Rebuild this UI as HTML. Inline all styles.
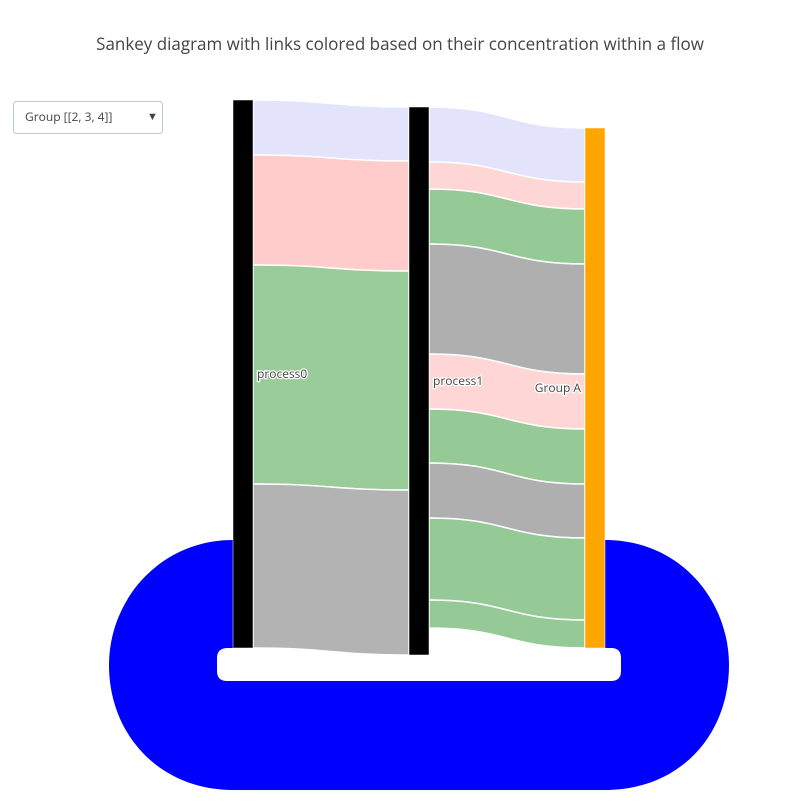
<!DOCTYPE html>
<html><head><style>
body{margin:0;background:#fff;width:800px;height:800px;overflow:hidden;font-family:"Open Sans","Liberation Sans",sans-serif}
svg text{font-family:"Open Sans","Liberation Sans",sans-serif}
</style></head><body>
<svg width="800" height="800" xmlns="http://www.w3.org/2000/svg">
<text x="400" y="50" text-anchor="middle" font-size="17" fill="#444">Sankey diagram with links colored based on their concentration within a flow</text>
<path fill="#0000ff" fill-rule="evenodd" d="M233,540 L605,540 C680,540 729,600 729,665 C729,735 680,790 605,790 L233,790 C160,790 109,735 109,665 C109,600 160,540 233,540 Z M228,648 L611,648 Q621,648 621,658 L621,671 Q621,681 611,681 L227,681 Q217,681 217,671 L217,658 Q217,648 228,648 Z"/>
<rect x="233" y="540" width="372" height="108" fill="#fff"/>
<g stroke="#fff" stroke-width="1.5">
<path fill="#e3e3fc" d="M253,100C331,100 331,107 409,107L409,161C331,161 331,155 253,155Z"/>
<path fill="#ffcccc" d="M253,155C331,155 331,161 409,161L409,271C331,271 331,265 253,265Z"/>
<path fill="#99cc99" d="M253,265C331,265 331,271 409,271L409,490C331,490 331,484 253,484Z"/>
<path fill="#b3b3b3" d="M253,484C331,484 331,490 409,490L409,655C331,655 331,648 253,648Z"/>
<path fill="#e3e3fc" d="M429,107C507,107 507,128 585,128L585,182C507,182 507,162 429,162Z"/>
<path fill="#ffd6d6" d="M429,162C507,162 507,182 585,182L585,209C507,209 507,189 429,189Z"/>
<path fill="#95c995" d="M429,189C507,189 507,209 585,209L585,264C507,264 507,244 429,244Z"/>
<path fill="#afafaf" d="M429,244C507,244 507,264 585,264L585,374C507,374 507,354 429,354Z"/>
<path fill="#ffd6d6" d="M429,354C507,354 507,374 585,374L585,429C507,429 507,409 429,409Z"/>
<path fill="#95c995" d="M429,409C507,409 507,429 585,429L585,484C507,484 507,463 429,463Z"/>
<path fill="#afafaf" d="M429,463C507,463 507,484 585,484L585,538C507,538 507,518 429,518Z"/>
<path fill="#95c995" d="M429,518C507,518 507,538 585,538L585,620C507,620 507,600 429,600Z"/>
<path fill="#95c995" d="M429,600C507,600 507,620 585,620L585,648C507,648 507,628 429,628Z"/>
</g>
<rect x="233" y="100" width="20" height="548" fill="#000" stroke="#fff" stroke-width="0.5"/>
<rect x="409" y="107" width="20" height="548" fill="#000" stroke="#fff" stroke-width="0.5"/>
<rect x="585" y="128" width="20" height="520" fill="#ffa500" stroke="#fff" stroke-width="0.5"/>
<g font-size="12" fill="#444" stroke="#fff" stroke-width="2.5" paint-order="stroke">
<text x="257" y="378">process0</text>
<text x="433" y="385">process1</text>
<text x="581" y="392" text-anchor="end">Group A</text>
</g>
<rect x="13.5" y="101.5" width="149" height="32" rx="3" fill="#fff" stroke="#bec8d9"/>
<text x="25" y="121" font-size="12" fill="#444">Group [[2, 3, 4]]</text>
<text x="147" y="120" font-size="11" fill="#444">▼</text>
</svg>
</body></html>
